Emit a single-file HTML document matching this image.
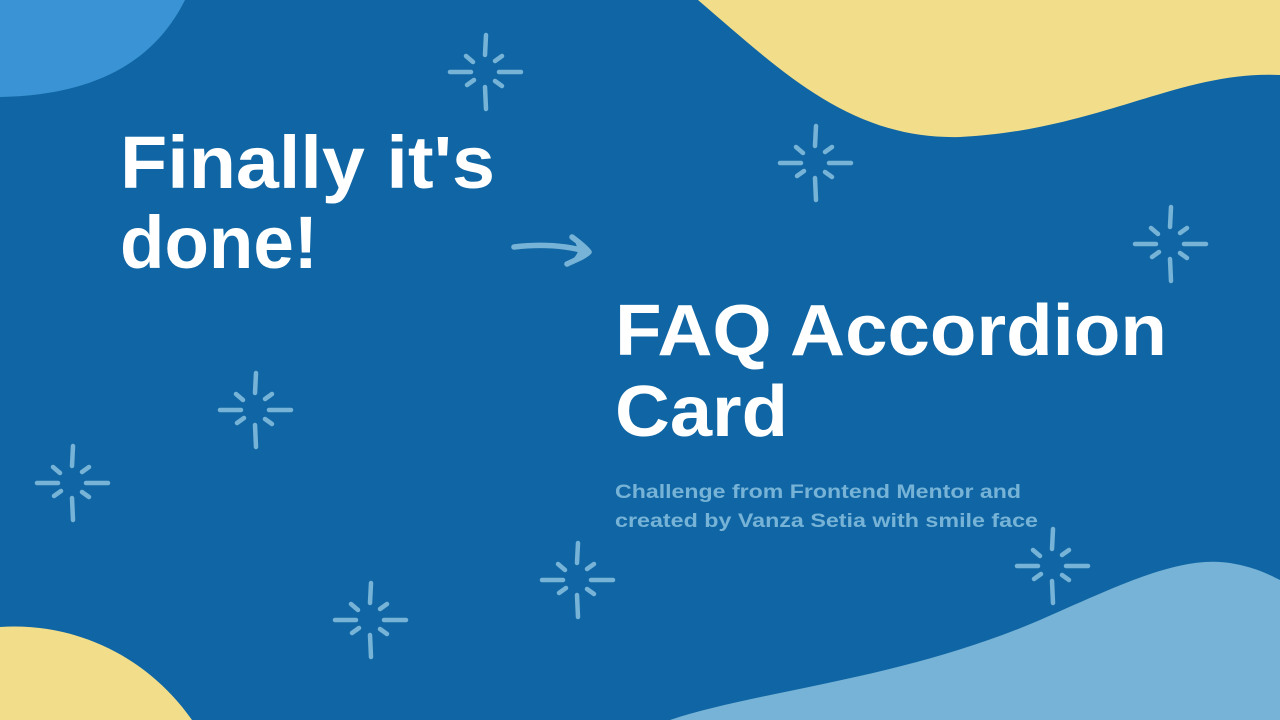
<!DOCTYPE html>
<html><head><meta charset="utf-8"><style>
html,body{margin:0;padding:0;background:#1066a4;width:1280px;height:720px;overflow:hidden}
svg{display:block}
text{font-family:"Liberation Sans",sans-serif;font-weight:bold}
</style></head><body>
<svg width="1280" height="720" viewBox="0 0 1280 720" xmlns="http://www.w3.org/2000/svg">
<defs>
<g id="sp" stroke="#76b3d6" stroke-width="4.5" stroke-linecap="round" fill="none">
<path d="M1-37L0-17M0 15L1 37M-35 0L-14 0M14 0L36 0M-19-16L-12-10M10-11L17-16M-18 13L-11 8M10 9L17 14"/>
</g>
</defs>
<rect width="1280" height="720" fill="#1066a4"/>
<path d="M0 0H185C160 50 110 95 0 97Z" fill="#3a93d4"/>
<path d="M698 0H1280V75C1180 70 1100 130 960 137C850 140 780 70 698 0Z" fill="#f2de8a"/>
<path d="M0 627C80 622 150 660 192 720H0Z" fill="#f2de8a"/>
<path d="M670 720C760 690 900 680 1040 620C1120 585 1180 555 1230 563C1255 567 1270 575 1280 580V720Z" fill="#76b3d6"/>
<use href="#sp" x="485" y="72"/>
<use href="#sp" x="815" y="163"/>
<use href="#sp" x="1170" y="244"/>
<use href="#sp" x="255" y="410"/>
<use href="#sp" x="72" y="483"/>
<use href="#sp" x="577" y="580"/>
<use href="#sp" x="370" y="620"/>
<use href="#sp" x="1052" y="566"/>
<path d="M514 247C540 244 565 245 588 252M572 237C580 243 586 248 589 252C584 257 575 260 567 264" stroke="#76b3d6" stroke-width="5.5" stroke-linecap="round" stroke-linejoin="round" fill="none"/>
<path d="M574 238L590 252L568 264C574 258 578 254 578 250Z" fill="#76b3d6"/>
<text x="120" y="188" font-size="74" fill="#fff" textLength="375" lengthAdjust="spacingAndGlyphs">Finally it's</text>
<text x="120" y="268" font-size="74" fill="#fff" textLength="198" lengthAdjust="spacingAndGlyphs">done!</text>
<text x="615" y="355" font-size="72" fill="#fff" textLength="552" lengthAdjust="spacingAndGlyphs">FAQ Accordion</text>
<text x="615" y="436" font-size="72" fill="#fff" textLength="173" lengthAdjust="spacingAndGlyphs">Card</text>
<text x="615" y="498" font-size="19" fill="#76b3d6" textLength="406" lengthAdjust="spacingAndGlyphs">Challenge from Frontend Mentor and</text>
<text x="615" y="527" font-size="19" fill="#76b3d6" textLength="423" lengthAdjust="spacingAndGlyphs">created by Vanza Setia with smile face</text>
</svg>
</body></html>
